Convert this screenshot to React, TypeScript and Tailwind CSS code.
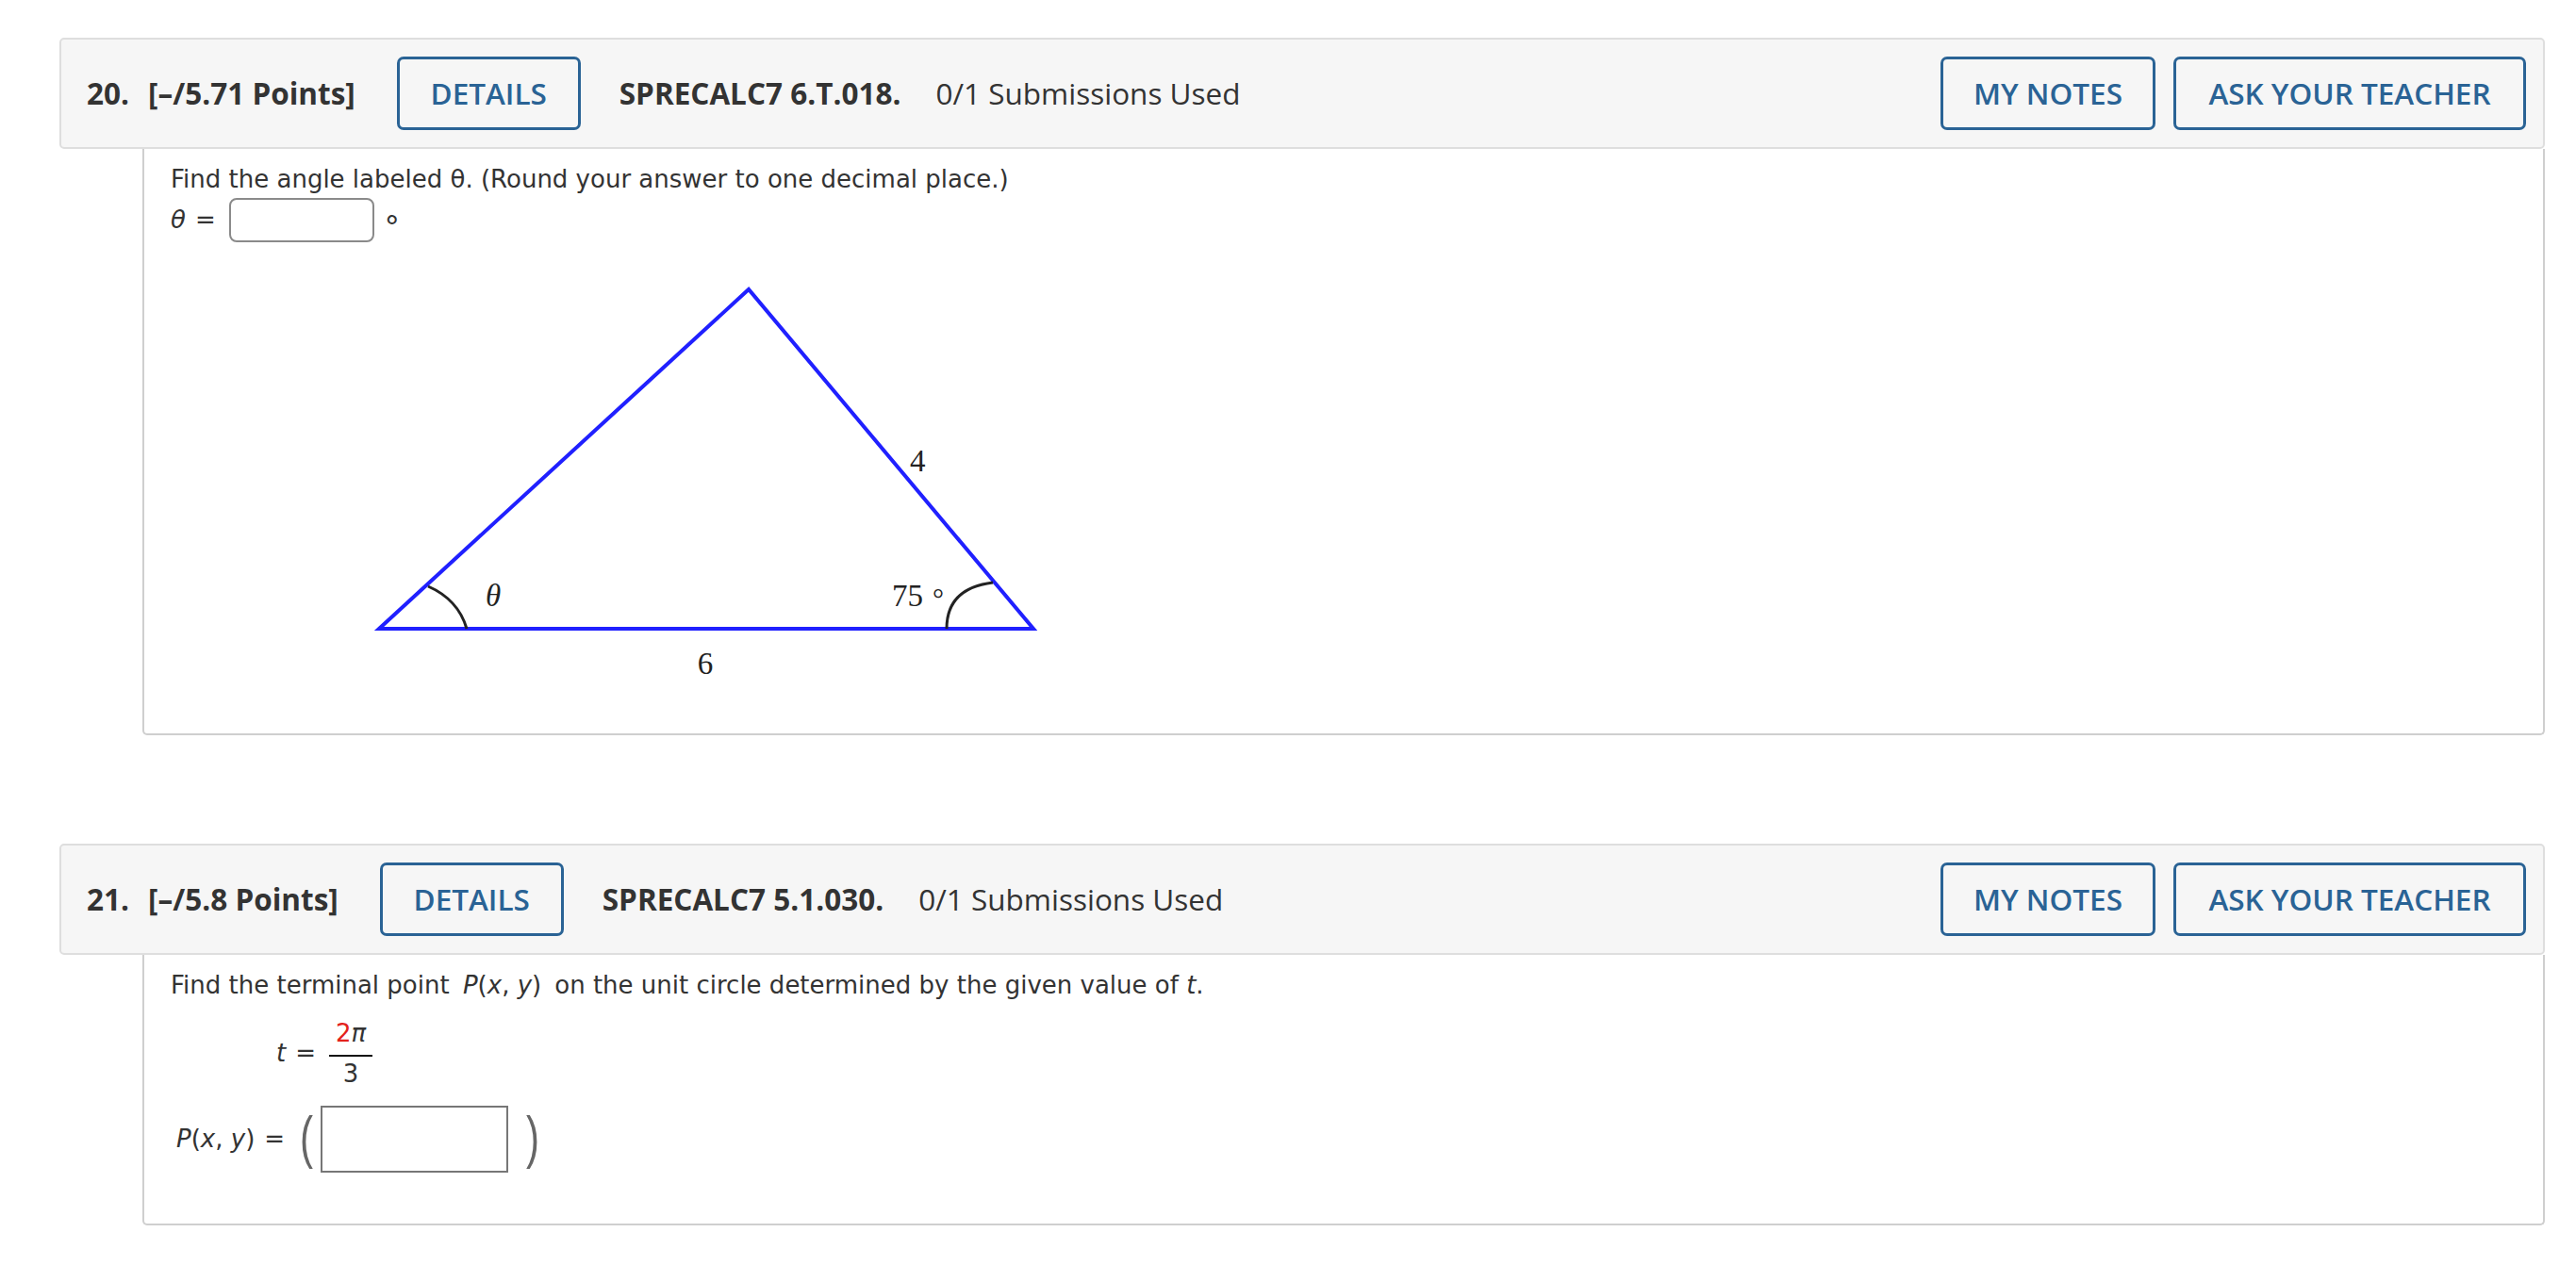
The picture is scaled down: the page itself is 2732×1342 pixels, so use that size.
import React from 'react';

const sans = { fontFamily: '"Open Sans", "Liberation Sans", sans-serif' };

interface HeaderProps {
  num: string;
  points: string;
  code: string;
}

function QuestionHeader({ num, points, code }: HeaderProps) {
  return (
    <div
      className="flex items-center justify-between h-[118px] bg-[#f6f6f6] border-2 border-[#dedede] rounded-[5px] pl-[27px] pr-[18px] text-[31.5px] text-[#333]"
      style={sans}
    >
      <div className="flex items-center">
        <span className="font-bold w-[65px]">{num}</span>
        <span className="font-bold">{points}</span>
        <button className="ml-[44px] w-[195px] h-[78px] flex items-center justify-center border-[3.5px] border-[#2a6395] rounded-[7px] text-[#2a6395] font-semibold">
          DETAILS
        </button>
        <span className="ml-[41px] font-bold">{code}</span>
        <span className="ml-[37px]">0/1 Submissions Used</span>
      </div>
      <div className="flex items-center gap-[19px] font-semibold">
        <button className="w-[228px] h-[78px] flex items-center justify-center border-[3.5px] border-[#2a6395] rounded-[7px] text-[#2a6395]">
          MY NOTES
        </button>
        <button className="w-[374px] h-[78px] flex items-center justify-center border-[3.5px] border-[#2a6395] rounded-[7px] text-[#2a6395]">
          ASK YOUR TEACHER
        </button>
      </div>
    </div>
  );
}

function Triangle() {
  return (
    <svg width="760" height="460" viewBox="0 0 760 460" className="ml-[199px] mt-[23px] block">
      <polygon
        points="22,387 414,27 716,387"
        fill="none"
        stroke="#2020ff"
        strokeWidth="4"
        strokeLinejoin="miter"
      />
      <path d="M74 342 Q106 356 115 387" fill="none" stroke="#222" strokeWidth="3" />
      <path d="M673 338 Q624 344 624 387" fill="none" stroke="#222" strokeWidth="3" />
      <g fontFamily='"Liberation Serif", serif' fontSize="33" fill="#222">
        <text x="585" y="220">4</text>
        <text x="368" y="435" textAnchor="middle">6</text>
        <text x="135" y="363" fontStyle="italic">θ</text>
        <text x="566" y="363">75</text>
        <text x="609" y="365" fontSize="30">°</text>
      </g>
    </svg>
  );
}

function Paren({ children, className }: { children: React.ReactNode; className: string }) {
  return (
    <span
      className={`text-[42px] leading-none text-[#666] scale-y-[1.45] inline-block ${className}`}
      style={{ fontFamily: '"Liberation Sans", sans-serif' }}
    >
      {children}
    </span>
  );
}

export default function App() {
  const q = { fontFamily: '"DejaVu Sans", Verdana, sans-serif' };
  return (
    <div className="bg-white min-h-screen pt-[40px] pl-[63px] pr-[33px]">
      {/* Question 20 */}
      <div>
        <QuestionHeader num="20." points="[–/5.71 Points]" code="SPRECALC7 6.T.018." />
        <div
          className="ml-[88px] border-x-2 border-b-2 border-[#cfcfcf] rounded-b-[5px] pl-[28px] pt-[14px] pb-[38px] text-[26px] text-[#333]"
          style={q}
        >
          <p className="leading-[36px]">Find the angle labeled θ. (Round your answer to one decimal place.)</p>
          <div className="flex items-center mt-[2px] h-[47px]">
            <span className="italic">θ</span>
            <span className="ml-[10px]">=</span>
            <input
              type="text"
              className="ml-[14px] w-[154px] h-[47px] border-2 border-[#8a8a8a] rounded-[8px] bg-white"
            />
            <span className="ml-[11px] mt-[14px] text-[32px] leading-none">°</span>
          </div>
          <Triangle />
        </div>
      </div>

      {/* Question 21 */}
      <div className="mt-[115px]">
        <QuestionHeader num="21." points="[–/5.8 Points]" code="SPRECALC7 5.1.030." />
        <div
          className="ml-[88px] border-x-2 border-b-2 border-[#cfcfcf] rounded-b-[5px] pl-[28px] pt-[14px] pb-[54px] text-[26px] text-[#333]"
          style={q}
        >
          <p className="leading-[36px]">
            Find the terminal point <span className="italic ml-[6px]">P</span>(<span className="italic">x</span>,{' '}
            <span className="italic">y</span>)<span className="ml-[14px]">on the unit circle determined by the given value of </span>
            <span className="italic">t</span>.
          </p>
          <div className="flex items-center mt-[18px] pl-[112px]">
            <span className="italic">t</span>
            <span className="ml-[10px]">=</span>
            <div className="ml-[14px] flex flex-col items-center w-[46px]">
              <div className="h-[30px] leading-[30px]">
                <span className="text-[#e3221c]">2</span>
                <span className="italic">π</span>
              </div>
              <div className="w-[46px] border-t-2 border-[#111] mt-[8px]" />
              <div className="h-[30px] leading-[30px] mt-[3px]">3</div>
            </div>
          </div>
          <div className="flex items-center mt-[19px] pl-[6px]">
            <span className="italic">P</span>
            <span>(</span>
            <span className="italic">x</span>
            <span>,&nbsp;</span>
            <span className="italic">y</span>
            <span>)</span>
            <span className="ml-[10px]">=</span>
            <Paren className="ml-[16px] -mt-[4px]">(</Paren>
            <input type="text" className="ml-[8px] w-[199px] h-[71px] border-2 border-[#777] bg-white" />
            <Paren className="ml-[19px] -mt-[4px]">)</Paren>
          </div>
        </div>
      </div>
    </div>
  );
}
